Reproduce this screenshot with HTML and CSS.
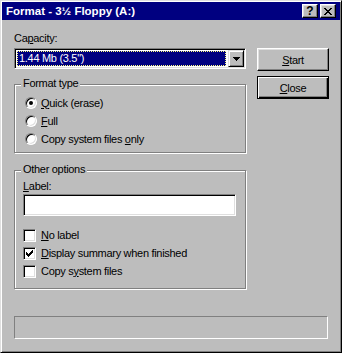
FILE: index.html
```html
<!DOCTYPE html>
<html>
<head>
  <title>Format - 3½ Floppy (A:)</title>
  <meta charset="utf-8">
  <link rel="stylesheet" href="styles.css">
</head>
<body>
  <div class="window">
    <div class="titlebar">
      <span class="title">Format - 3½ Floppy (A:)</span>
      <div class="caption-buttons">
        <button class="caption-btn">?</button>
        <button class="caption-btn">
          <svg width="8" height="7" viewBox="0 0 8 7" shape-rendering="crispEdges">
            <path d="M0 0h2v1h1v1h2v-1h1v-1h2v1h-1v1h-1v1h-1v1h1v1h1v1h1v1h-2v-1h-1v-1h-2v1h-1v1h-2v-1h1v-1h1v-1h1v-1h-1v-1h-1v-1h-1z" fill="#000"/>
          </svg>
        </button>
      </div>
    </div>

    <div class="content">
      <div class="main">
        <div class="left">
          <div class="field-label">Ca<u>p</u>acity:</div>
          <div class="combo">
            <div class="combo-value">1.44 Mb (3.5")</div>
            <div class="combo-arrow">
              <svg width="7" height="4" viewBox="0 0 7 4" shape-rendering="crispEdges">
                <path d="M0 0h7v1h-1v1h-1v1h-1v1h-1v-1h-1v-1h-1v-1h-1z" fill="#000"/>
              </svg>
            </div>
          </div>

          <div class="group format-group">
            <span class="legend">Format type</span>
            <div class="option"><span class="radio checked"></span><span><u>Q</u>uick (erase)</span></div>
            <div class="option"><span class="radio"></span><span><u>F</u>ull</span></div>
            <div class="option"><span class="radio"></span><span>Copy system files <u>o</u>nly</span></div>
          </div>

          <div class="group other-group">
            <span class="legend">Other options</span>
            <div class="field-label"><u>L</u>abel:</div>
            <input type="text" class="text-input">
            <div class="checks">
              <div class="option"><span class="checkbox"></span><span><u>N</u>o label</span></div>
              <div class="option">
                <span class="checkbox">
                  <svg width="7" height="7" viewBox="0 0 7 7" shape-rendering="crispEdges">
                    <path d="M6 0h1v3h-1v1h-1v1h-1v1h-1v1h-1v-1h-1v-1h-1v-3h1v1h1v1h1v-1h1v-1h1z" fill="#000"/>
                  </svg>
                </span>
                <span><u>D</u>isplay summary when finished</span>
              </div>
              <div class="option"><span class="checkbox"></span><span>Copy s<u>y</u>stem files</span></div>
            </div>
          </div>
        </div>

        <div class="right">
          <button class="btn"><u>S</u>tart</button>
          <button class="btn default"><u>C</u>lose</button>
        </div>
      </div>

      <div class="progress"></div>
    </div>
  </div>
</body>
</html>
```

FILE: styles.css
```css
body {
    margin: 0;
    font-family: "Liberation Sans", Arial, sans-serif;
    font-size: 11px;
    letter-spacing: -0.3px;
    color: #000;
}

.window {
    box-sizing: border-box;
    width: 342px;
    height: 353px;
    padding: 1px;
    background-color: #bdbdbd;
    border: 1px solid;
    border-color: #dfdfdf #000 #000 #dfdfdf;
    box-shadow: inset 1px 1px 0 #fff, inset -1px -1px 0 #808080;
}

/* title bar */
.titlebar {
    display: flex;
    align-items: center;
    justify-content: space-between;
    height: 18px;
    padding: 0 4px 0 4px;
    background-color: #000080;
}
.title {
    color: #fff;
    font-weight: bold;
    font-size: 11.5px;
    letter-spacing: 0;
    line-height: 13px;
}
.caption-buttons {
    display: flex;
    gap: 2px;
}
.caption-btn {
    box-sizing: border-box;
    display: flex;
    align-items: center;
    justify-content: center;
    width: 16px;
    height: 14px;
    padding: 0;
    background-color: #bdbdbd;
    border: 1px solid;
    border-color: #fff #000 #000 #fff;
    box-shadow: inset -1px -1px 0 #808080, inset 1px 1px 0 #dfdfdf;
    font-family: "Liberation Sans", Arial, sans-serif;
    font-weight: bold;
    font-size: 12px;
    line-height: 11px;
    color: #000;
}

/* body */
.content {
    padding: 12px 11px 0 12px;
}
.main {
    display: flex;
    gap: 11px;
}
.left {
    width: 232px;
}
.right {
    display: flex;
    flex-direction: column;
    gap: 5px;
    width: 72px;
    padding-top: 16px;
}

.field-label {
    line-height: 13px;
    height: 13px;
}

/* combo box */
.combo {
    box-sizing: border-box;
    display: flex;
    height: 21px;
    margin-top: 3px;
    padding: 1px;
    background-color: #fff;
    border: 1px solid;
    border-color: #808080 #fff #fff #808080;
    box-shadow: inset 1px 1px 0 #000, inset -1px -1px 0 #dfdfdf;
}
.combo-value {
    flex: 1;
    margin: 1px;
    padding-left: 1px;
    background-color: #000080;
    border: 1px dotted #ffff80;
    color: #fff;
    line-height: 13px;
}
.combo-arrow {
    box-sizing: border-box;
    display: flex;
    align-items: center;
    justify-content: center;
    width: 16px;
    margin-left: 1px;
    background-color: #bdbdbd;
    border: 1px solid;
    border-color: #dfdfdf #000 #000 #dfdfdf;
    box-shadow: inset 1px 1px 0 #fff, inset -1px -1px 0 #808080;
}

/* group boxes */
.group {
    position: relative;
    box-sizing: border-box;
    border: 1px solid #808080;
    box-shadow: inset 1px 1px 0 #fff, 1px 1px 0 #fff;
}
.legend {
    position: absolute;
    top: -8px;
    left: 6px;
    padding: 0 2px;
    line-height: 13px;
    background-color: #bdbdbd;
}
.format-group {
    height: 69px;
    margin-top: 15px;
    padding: 9px 0 0 10px;
}
.other-group {
    height: 119px;
    margin-top: 17px;
    padding: 9px 9px 0 8px;
}

.option {
    display: flex;
    align-items: center;
    gap: 4px;
    height: 18px;
    line-height: 13px;
}

.radio {
    position: relative;
    box-sizing: border-box;
    width: 12px;
    height: 12px;
    border-radius: 50%;
    background-color: #fff;
    border: 1px solid;
    border-color: #808080 #fff #fff #808080;
    box-shadow: inset 1px 1px 0 #000, inset -1px -1px 0 #dfdfdf;
}
.radio.checked::after {
    content: "";
    position: absolute;
    top: 3px;
    left: 3px;
    width: 4px;
    height: 4px;
    border-radius: 50%;
    background-color: #000;
}

.text-input {
    display: block;
    box-sizing: border-box;
    width: 213px;
    height: 22px;
    margin: 1px 0 0 0;
    padding: 0;
    background-color: #fff;
    border: 1px solid;
    border-color: #808080 #fff #fff #808080;
    box-shadow: inset 1px 1px 0 #000, inset -1px -1px 0 #dfdfdf;
    outline: none;
}

.checks {
    margin-top: 10px;
}
.checks .option {
    gap: 5px;
}
.checkbox {
    box-sizing: border-box;
    display: flex;
    align-items: center;
    justify-content: center;
    width: 13px;
    height: 13px;
    background-color: #fff;
    border: 1px solid;
    border-color: #808080 #fff #fff #808080;
    box-shadow: inset 1px 1px 0 #000, inset -1px -1px 0 #dfdfdf;
}

/* push buttons */
.btn {
    box-sizing: border-box;
    width: 72px;
    height: 23px;
    padding: 0;
    background-color: #bdbdbd;
    border: 1px solid;
    border-color: #fff #000 #000 #fff;
    box-shadow: inset -1px -1px 0 #808080, inset 1px 1px 0 #dfdfdf;
    font-family: "Liberation Sans", Arial, sans-serif;
    font-size: 11px;
    letter-spacing: -0.3px;
    color: #000;
}
.btn.default {
    border-color: #000;
    box-shadow: inset 1px 1px 0 #fff, inset -1px -1px 0 #000, inset -2px -2px 0 #808080;
}

/* progress bar */
.progress {
    box-sizing: border-box;
    width: 314px;
    height: 23px;
    margin-top: 27px;
    border: 1px solid;
    border-color: #808080 #fff #fff #808080;
}
```
